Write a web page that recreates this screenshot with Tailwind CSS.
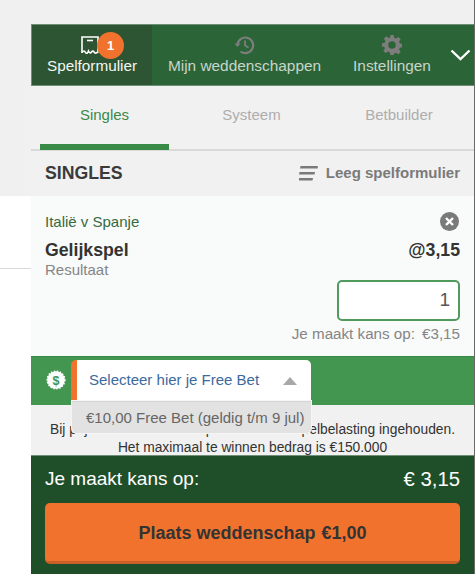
<!DOCTYPE html>
<html lang="en">
<head>
  <script src="https://cdn.jsdelivr.net/npm/@tailwindcss/browser@4"></script>
  <meta charset="UTF-8">
  <title>Spelformulier</title>
</head>
<body class="bg-white font-['Liberation_Sans',Arial,sans-serif] overflow-hidden">
  <div class="flex h-[574px] w-[475px]">
    <!-- Page behind the betslip -->
    <div class="w-[31px] shrink-0">
      <div class="h-[196px] bg-[#f0f0f0]"></div>
      <div class="mt-[72px] border-t border-[#d9d9d9]"></div>
    </div>

    <div class="w-[443px] flex flex-col">
      <div class="h-6 bg-[#f0f0f0]"></div>

      <!-- Top navigation -->
      <div class="h-[62px] flex bg-[#2b6537] border border-[#6e8f75] border-r-0">
        <div class="relative w-[120px] bg-[#2e5533] flex flex-col items-center pt-[11px] text-white">
          <svg class="w-[18px] h-[18px] mr-[4px]" viewBox="0 0 18 18" fill="none" stroke="#fff" stroke-width="1.600">
            <path d="M1 17V1h16v14"/><path d="M1 16.500c1.500-2 2.500-2 3.500 0s2.500 0 3-1.500c1 2 2 2.500 3 1s2-1 3 .5 2.500 0 4-1"/><path d="M6 4.500h6"/>
          </svg>
          <span class="absolute left-[65px] top-[7px] w-[27px] h-[27px] rounded-full bg-[#f1722d] flex items-center justify-center text-[13px] font-bold">1</span>
          <span class="text-[15.300px] leading-[17px] mt-[3px] text-[#f4f6f4]">Spelformulier</span>
        </div>
        <div class="w-[185px] flex flex-col items-center pt-[10px] text-[#c9d4cb]">
          <svg class="w-[21px] h-[20px]" viewBox="0 0 21 20" fill="none" stroke="#7d7d7d" stroke-width="2.200">
            <path d="M3.500 10a7.800 7.800 0 1 1 3 6.500"/><path d="M0.500 8.500h6L3.500 12z" fill="#7d7d7d" stroke="none"/><path d="M11 5.500V10.500l3.500 2" stroke-width="1.800"/>
          </svg>
          <span class="text-[15.400px] leading-[17px] mt-[2px]">Mijn weddenschappen</span>
        </div>
        <div class="w-[110px] flex flex-col items-center pt-[10px] text-[#c9d4cb]">
          <svg class="w-[20px] h-[20px]" viewBox="0 0 24 24" fill="#7d7d7d">
            <path fill-rule="evenodd" d="M10 0h4l.6 3.300 2.200.9L19.600 2.300l2.800 2.800-1.900 2.800.9 2.200 3.300.6v4l-3.300.6-.9 2.200 1.900 2.800-2.800 2.800-2.800-1.900-2.200.9L14 24h-4l-.6-3.300-2.200-.9-2.800 1.900-2.800-2.800 1.900-2.800-.9-2.200L0 14v-4l3.300-.6.9-2.200-1.900-2.800 2.800-2.800 2.800 1.900 2.200-.9zM12 7.500a4.500 4.500 0 1 0 0 9 4.500 4.500 0 0 0 0-9z"/>
          </svg>
          <span class="text-[15.400px] leading-[17px] mt-[2px]">Instellingen</span>
        </div>
        <div class="flex-1 flex items-center justify-center">
          <svg class="w-[21px] h-[12px]" viewBox="0 0 21 12" fill="none" stroke="#fff" stroke-width="2.400"><path d="M1.500 1.500l9 8.500 9-8.500"/></svg>
        </div>
      </div>

      <!-- Bet type tabs -->
      <div class="h-[65px] flex bg-[#f1f1f1] border-b-2 border-[#d9d9d9] pl-[9px]">
        <div class="relative w-[129px] flex justify-center pt-[20px] text-[15px] leading-[17px] text-[#3a8a47]">
          Singles
          <div class="absolute left-0 right-0 bottom-[-1px] h-[6px] bg-[#3a8a47]"></div>
        </div>
        <div class="w-[165px] flex justify-center pt-[20px] text-[15px] leading-[17px] text-[#adadad]">Systeem</div>
        <div class="w-[130px] flex justify-center pt-[20px] text-[15px] leading-[17px] text-[#adadad]">Betbuilder</div>
      </div>

      <div class="h-[45px] flex items-center justify-between bg-[#f1f1f1] pl-[14px] pr-[14px]">
        <span class="text-[17.700px] font-bold text-[#3a3a3a]">SINGLES</span>
        <span class="flex items-center gap-[8px] text-[15px] font-bold text-[#7a7a7a]">
          <svg class="w-[19px] h-[15px]" viewBox="0 0 19 15" fill="#7a7a7a"><path d="M1.500 0H19l-.5 2.500H1z"/><path d="M.5 6h15.500l-.5 2.500H0z"/><path d="M0 12h14l-.5 2.500H0z"/></svg>
          Leeg spelformulier
        </span>
      </div>

      <!-- Selection -->
      <div class="h-[160px] bg-[#f9fafa] px-[14px] relative">
        <div class="pt-[18px] text-[15px] leading-[16px] text-[#356b41]">Italië v Spanje</div>
        <div class="mt-[11px] flex justify-between text-[17.700px] leading-[19px] font-bold text-[#333]">
          <span>Gelijkspel</span><span>@3,15</span>
        </div>
        <div class="text-[15px] leading-[16px] text-[#858585] mt-[2px]">Resultaat</div>
        <svg class="absolute right-[15px] top-[16px] w-[19px] h-[19px]" viewBox="0 0 19 19">
          <circle cx="9.500" cy="9.500" r="9.500" fill="#7a7a7a"/><path d="M6 6l7 7M13 6l-7 7" stroke="#fff" stroke-width="2.400"/>
        </svg>
        <div class="absolute right-[14px] top-[84px] w-[123px] h-[41px] bg-white border-2 border-[#4f9a5c] rounded-[5px] flex items-center justify-end pr-[8px] text-[19px] text-[#555]">1</div>
        <div class="absolute right-[14px] top-[130px] flex gap-[7px] text-[15.200px] leading-[16px] text-[#858585]">
          <span>Je maakt kans op:</span><span>€3,15</span>
        </div>
      </div>

      <!-- Free bet -->
      <div class="h-[49px] bg-[#42964f] border-t border-[#3a8a47] relative">
        <svg class="absolute left-[12px] top-[10px] w-[26px] h-[26px]" viewBox="0 0 26 26">
          <circle cx="13" cy="13" r="8.800" fill="#fff" stroke="#fff" stroke-width="1.500" stroke-dasharray="1.500 1.500"/>
          <text x="13" y="17.500" text-anchor="middle" font-size="12.500" font-weight="700" fill="#42964f">$</text>
        </svg>
        <div class="absolute left-[40px] top-[3px] w-[240px] h-[41px] bg-white border-l-[6px] border-[#f1722d] rounded-tl-[5px] rounded-tr-[5px] flex items-center justify-between pl-[12px] pr-[14px]">
          <span class="text-[15px] text-[#3d6a9e]">Selecteer hier je Free Bet</span>
          <svg class="w-[14px] h-[8px]" viewBox="0 0 14 8" fill="#a8a8a8"><path d="M7 0l7 8H0z"/></svg>
        </div>
      </div>

      <!-- Notice -->
      <div class="h-[50px] bg-[#f1f1f1] relative flex flex-col items-center pt-[16px] text-[13.800px] leading-[18px] text-[#333]">
        <span class="whitespace-nowrap">Bij prijzen boven de drempel wordt kansspelbelasting ingehouden.</span>
        <span class="whitespace-nowrap">Het maximaal te winnen bedrag is €150.000</span>
        <div class="absolute left-[41px] top-[-4px] w-[239px] h-[32px] bg-[#e2e2e2] border-t border-[#d5d5d5] rounded-b-[5px] shadow-[0_0_0_1px_#f5f5f5] flex items-center pl-[14px] text-[15px] text-[#666] whitespace-nowrap">€10,00 Free Bet (geldig t/m 9 jul)</div>
      </div>

      <!-- Footer -->
      <div class="flex-1 bg-[#1f4f29] px-[14px] pt-[14px] border-t border-[#6e8f75]">
        <div class="flex justify-between items-center h-[19px] text-[19px] text-white">
          <span>Je maakt kans op:</span><span class="text-[20.300px]">€ 3,15</span>
        </div>
        <div class="mt-[14px] h-[61px] rounded-[5px] bg-[#f1722d] border-b-[3px] border-[#c9602a] pt-[3px] flex items-center justify-center text-[18px] font-bold text-[#333] gap-[6px]">
          <span>Plaats weddenschap</span><span>€1,00</span>
        </div>
      </div>
    </div>
    <div class="w-px bg-[#6a6a6a]"></div>
  </div>
</body>
</html>
